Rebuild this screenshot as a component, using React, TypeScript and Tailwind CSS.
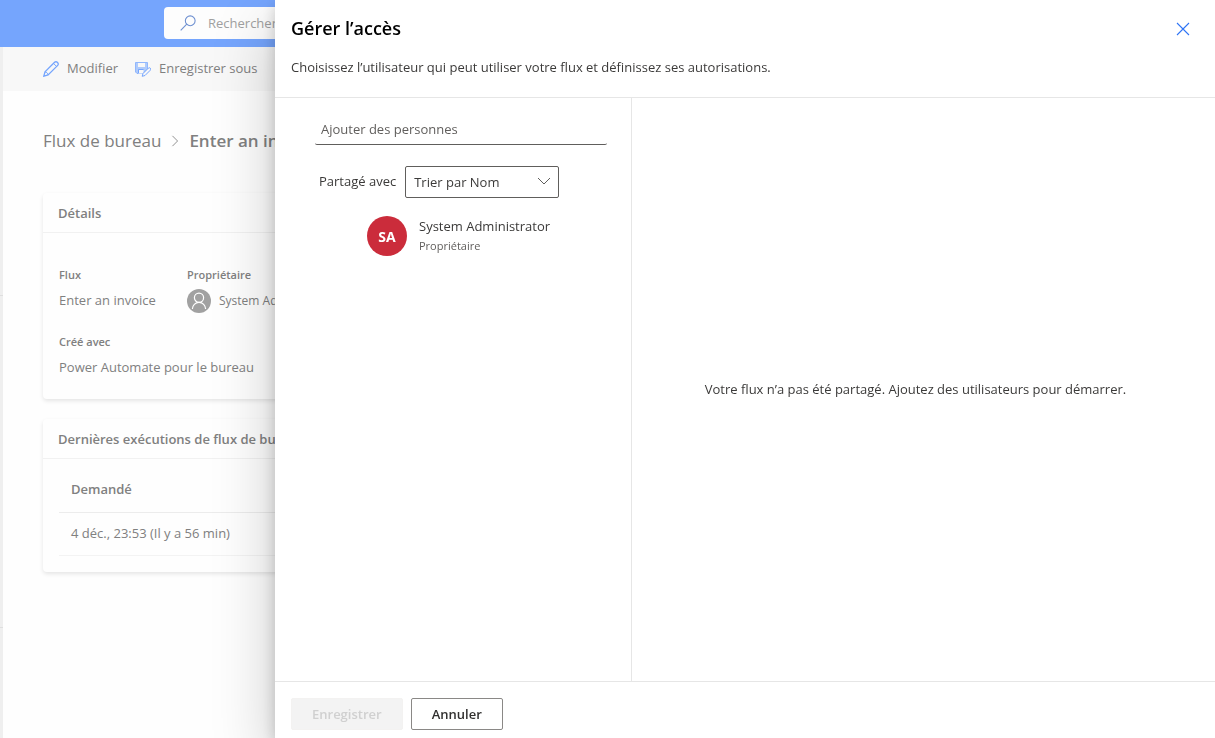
import clsx from 'clsx';
import type { ReactNode } from 'react';

type IconProps = { className?: string };

const SearchIcon = ({ className }: IconProps) => (
  <svg viewBox="0 0 18 18" fill="none" stroke="currentColor" className={className}>
    <circle cx="11.5" cy="6.5" r="5.5" strokeWidth="1.2" />
    <path d="M7.6 10.4.8 17.2" strokeWidth="1.2" />
  </svg>
);

const EditIcon = ({ className }: IconProps) => (
  <svg viewBox="0 0 16 16" fill="none" stroke="currentColor" className={className}>
    <path
      d="M.8 15.2 2 10.9 11.6 1.300a1.900 1.900 0 0 1 2.700 0l.4.4a1.900 1.900 0 0 1 0 2.700L5.100 14z"
      strokeWidth="1.3"
    />
    <path d="M2 10.9c1.700.2 2.900 1.400 3.100 3.100M10.500 2.400l3.100 3.100" />
  </svg>
);

const SaveAsIcon = ({ className }: IconProps) => (
  <svg viewBox="0 0 16 16" fill="none" stroke="currentColor" className={className}>
    <path
      d="M.5 1.5h12v7L8 12.500H2L.5 11z"
      fill="currentColor"
      fillOpacity="0.55"
      strokeOpacity="0.7"
    />
    <path d="M3 2h7v4H3z" fill="#f8f8f8" stroke="none" />
    <path d="M3.5 9h5v3.500h-5z" fill="#f8f8f8" stroke="none" />
    <path d="M3.500 12V8.500h5" />
    <path d="m7.200 15.300.8-2.800 5.300-5.300a1.300 1.300 0 0 1 2 2L10 14.500z" fill="#f8f8f8" />
  </svg>
);

const ShareIcon = ({ className }: IconProps) => (
  <svg viewBox="0 0 16 16" fill="none" stroke="currentColor" className={className}>
    <path
      d="M.6 15.300V13c0-4.500 3.400-7.500 8.400-7.500V2l6.300 6L9 14v-3.500c-4 0-6.500 1.500-8.400 4.800z"
      strokeWidth="1.2"
    />
  </svg>
);

const ChevronIcon = ({ className }: IconProps) => (
  <svg viewBox="0 0 14 14" fill="none" stroke="currentColor" className={className}>
    <path d="m1 4 6 6 6-6" />
  </svg>
);

const PersonIcon = ({ className }: IconProps) => (
  <svg viewBox="0 0 24 24" fill="none" className={className}>
    <circle cx="12" cy="12" r="12" fill="#a1a1a1" />
    <g stroke="#fff" strokeWidth="1.2">
      <circle cx="12" cy="8.7" r="4.6" />
      <path d="M5.4 20a6.6 6.6 0 0 1 13.2 0" />
    </g>
  </svg>
);

const CloseIcon = ({ className }: IconProps) => (
  <svg viewBox="0 0 14 14" fill="none" stroke="currentColor" className={className}>
    <path d="m1 1 12 12M13 1 1 13" strokeWidth="1.1" />
  </svg>
);

const CommandButton = ({
  icon,
  title,
}: {
  icon: ReactNode;
  title: string;
}) => (
  <button type="button" className="flex items-center gap-2 text-[13px]">
    <span className="text-[#75a5fd]">{icon}</span>
    {title}
  </button>
);

const Card = ({
  title,
  children,
}: {
  title: string;
  children: ReactNode;
}) => (
  <section className="rounded-sm bg-[#fefefe] shadow-[0_2px_4px_rgba(0,0,0,0.1)]">
    <h2 className="border-b border-[#f1f1f1] px-[15px] pt-[9px] pb-[7px] text-[13px] leading-[23px] font-semibold">
      {title}
    </h2>
    {children}
  </section>
);

const Field = ({
  label,
  children,
}: {
  label: string;
  children: ReactNode;
}) => (
  <div>
    <dt className="text-[11px] leading-4 font-semibold">{label}</dt>
    <dd className="mt-1 flex h-7 items-center text-[13px] whitespace-nowrap">
      {children}
    </dd>
  </div>
);

const FlowDetails = () => (
  <div className="flex min-h-screen flex-col text-[#808080]">
    <header className="flex h-[47px] items-start bg-[#75a5fd] pt-[7px] pl-41">
      <label className="flex h-8 w-96 items-center gap-3 rounded-sm bg-[#fdfdfd] px-4 text-[#6d8fd0]">
        <SearchIcon className="h-4 w-4 shrink-0" />
        <input
          type="search"
          aria-label="Rechercher"
          placeholder="Rechercher"
          className="w-full bg-transparent pt-0.5 text-[13px] outline-none placeholder:text-[#a0a0a0]"
        />
      </label>
    </header>
    <div className="flex grow">
      <div className="flex w-[3px] flex-col bg-[#efefef]">
        <span className="mt-[248px] border-t border-[#dfdfdf]" />
        <span className="mt-[331px] border-t border-[#dfdfdf]" />
      </div>
      <main className="grow">
        <div className="flex h-11 items-center gap-[17px] bg-[#f8f8f8] px-10">
          <CommandButton icon={<EditIcon className="h-4 w-4" />} title="Modifier" />
          <CommandButton
            icon={<SaveAsIcon className="h-4 w-4" />}
            title="Enregistrer sous"
          />
          <button type="button" aria-label="Partager" className="text-[#75a5fd]">
            <ShareIcon className="h-4 w-4" />
          </button>
        </div>
        <div className="px-10">
          <nav className="flex items-center gap-2 pt-9 text-[17px] leading-7">
            <a href="#flux">Flux de bureau</a>
            <ChevronIcon className="h-3 w-3 -rotate-90" />
            <span className="font-semibold">Enter an invoice</span>
          </nav>
          <div className="mt-[38px] flex flex-col gap-5">
            <Card title="Détails">
              <dl className="grid grid-cols-[128px_1fr] gap-y-[19px] px-4 pt-[34px] pb-[17px]">
                <Field label="Flux">Enter an invoice</Field>
                <Field label="Propriétaire">
                  <PersonIcon className="mr-2 h-6 w-6" />
                  <span className="text-[12px]">System Administrator</span>
                </Field>
                <Field label="Créé avec">Power Automate pour le bureau</Field>
              </dl>
            </Card>
            <Card title="Dernières exécutions de flux de bureau">
              <div className="px-4 pt-2 pb-4">
                <table className="w-full text-left text-[13px]">
                  <thead>
                    <tr className="h-[45px] border-b border-[#ececec]">
                      <th className="px-3 font-semibold">Demandé</th>
                    </tr>
                  </thead>
                  <tbody>
                    <tr className="h-[43px] border-b border-[#f3f3f3]">
                      <td className="px-3">4 déc., 23:53 (Il y a 56 min)</td>
                    </tr>
                  </tbody>
                </table>
              </div>
            </Card>
          </div>
        </div>
      </main>
    </div>
  </div>
);

const PanelButton = ({
  title,
  disabled,
}: {
  title: string;
  disabled?: boolean;
}) => (
  <button
    type="button"
    disabled={disabled}
    className={clsx(
      'h-8 rounded-xs border px-5 pt-0.5 text-[13px] font-semibold',
      disabled
        ? 'border-[#f3f2f1] bg-[#f3f3f3] text-[#d0d0d0]'
        : 'border-[#8a8886] bg-white text-[#323130]',
    )}
  >
    {title}
  </button>
);

const AccessPanel = () => (
  <div
    role="dialog"
    aria-labelledby="panel-title"
    className="fixed inset-y-0 right-0 left-[275px] flex flex-col bg-white text-[13px] text-[#3b3a39] shadow-[0_26px_58px_rgba(0,0,0,0.22),0_5px_14px_rgba(0,0,0,0.18)]"
  >
    <header className="flex items-start justify-between border-b border-[#e6e6e6] px-4 pt-3.5 pb-5">
      <div>
        <h1 id="panel-title" className="text-[18px] leading-7 font-semibold text-black">
          Gérer l’accès
        </h1>
        <p className="mt-[15px] leading-5">
          Choisissez l’utilisateur qui peut utiliser votre flux et définissez ses
          autorisations.
        </p>
      </div>
      <button type="button" aria-label="Fermer" className="px-[9px] py-2 text-[#2f74f5]">
        <CloseIcon className="h-3.5 w-3.5" />
      </button>
    </header>
    <div className="flex grow">
      <section className="w-[357px] shrink-0 border-r border-[#e6e6e6] px-6 pt-[15px]">
        <div className="pl-4">
          <input
            type="text"
            aria-label="Ajouter des personnes"
            placeholder="Ajouter des personnes"
            className="h-8 w-full rounded-xs border-b border-[#605e5c] px-1.5 outline-none placeholder:text-[#605e5c]"
          />
        </div>
        <div className="mt-[21px] flex items-center gap-[9px] pl-5">
          <label htmlFor="sort">Partagé avec</label>
          <div className="relative">
            <select
              id="sort"
              className="h-8 w-[154px] appearance-none rounded-xs border border-[#605e5c] bg-white pt-0.5 pr-8 pl-2"
            >
              <option>Trier par Nom</option>
            </select>
            <ChevronIcon className="pointer-events-none absolute top-2 right-2 h-3.5 w-3.5 text-[#605e5c]" />
          </div>
        </div>
        <div className="mt-[18px] flex items-center gap-3 pl-17">
          <span className="flex h-10 w-10 items-center justify-center rounded-full bg-[#cb2c3b] text-[14px] font-bold text-white">
            SA
          </span>
          <div>
            <p className="leading-5">System Administrator</p>
            <p className="text-[11px] leading-5 text-[#605e5c]">Propriétaire</p>
          </div>
        </div>
      </section>
      <section className="flex grow items-center justify-center pr-4">
        <p>
          Votre flux n’a pas été partagé. Ajoutez des utilisateurs pour démarrer.
        </p>
      </section>
    </div>
    <footer className="flex gap-2 border-t border-[#e6e6e6] px-4 pt-4 pb-2">
      <PanelButton title="Enregistrer" disabled />
      <PanelButton title="Annuler" />
    </footer>
  </div>
);

export default function App() {
  return (
    <div className="overflow-hidden bg-[#fefefe] font-['Open_Sans',sans-serif]">
      <FlowDetails />
      <AccessPanel />
    </div>
  );
}
